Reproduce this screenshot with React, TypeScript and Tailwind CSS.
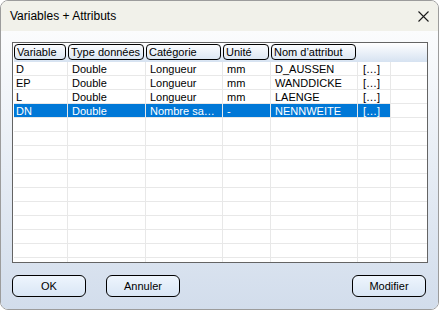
import React from "react";

const widths = [54, 78, 77, 48, 87, 33];
const headers = ["Variable", "Type données", "Catégorie", "Unité", "Nom d’attribut"];
const rows: string[][] = [
  ["D", "Double", "Longueur", "mm", "D_AUSSEN", "[…]"],
  ["EP", "Double", "Longueur", "mm", "WANDDICKE", "[…]"],
  ["L", "Double", "Longueur", "mm", "LAENGE", "[…]"],
  ["DN", "Double", "Nombre sa…", "-", "NENNWEITE", "[…]"],
];

function Row({ cells, selected }: { cells: string[]; selected?: boolean }) {
  return (
    <div className="flex h-[14px] shrink-0 border-b border-[#e8e8e8]">
      {widths.map((w, i) => (
        <div
          key={i}
          style={{ width: w }}
          className={`h-[13px] shrink-0 border-r border-[#e8e8e8] whitespace-nowrap overflow-hidden text-[11px] leading-[14px] ${
            i === 0 ? "pl-[2px]" : i === 5 ? "pl-[5px]" : "pl-[4px]"
          } ${selected ? "bg-[#0078d7] text-white" : "text-black"}`}
        >
          {cells[i] ?? ""}
        </div>
      ))}
      <div className="flex-1" />
    </div>
  );
}

function Btn({ label }: { label: string }) {
  return (
    <div className="w-[74px] h-[22px] rounded-[6px] border border-black bg-gradient-to-b from-[#eef5fd] to-[#d9e6f5] flex items-center justify-center text-[11px] text-black">
      {label}
    </div>
  );
}

export default function App() {
  const empty = Array.from({ length: 11 }, () => [] as string[]);
  return (
    <div
      className="w-[439px] h-[310px] border border-[#9c9c9c] rounded-[8px] overflow-hidden flex flex-col"
      style={{ fontFamily: '"Liberation Sans", Arial, sans-serif' }}
    >
      <div className="h-[30px] shrink-0 bg-[#f1f1ea] flex items-center justify-between pl-[9px] pr-[9px]">
        <span className="text-[12px] text-black">Variables + Attributs</span>
        <svg width="11" height="11" viewBox="0 0 11 11">
          <path d="M0.5 0.5 L10.5 10.5 M10.5 0.5 L0.5 10.5" stroke="#1a1a1a" strokeWidth="1.1" />
        </svg>
      </div>
      <div className="flex-1 bg-gradient-to-b from-[#fbfcfd] to-[#d2ddec] pt-[11px] pl-[11px] flex flex-col">
        <div className="w-[416px] h-[221px] border border-[#646464] bg-white overflow-hidden flex flex-col pl-[1px]">
          <div className="h-[19px] shrink-0 flex bg-gradient-to-b from-white to-[#d6e2f1] pt-[1px]">
            {headers.map((h, i) => (
              <div key={i} style={{ width: widths[i] }} className="shrink-0 h-[16px] pr-[2px]">
                <div className="h-[16px] border border-black rounded-[4px] pl-[2px] text-[11px] leading-[14px] text-black whitespace-nowrap overflow-hidden">
                  {h}
                </div>
              </div>
            ))}
          </div>
          {rows.map((r, i) => (
            <Row key={i} cells={r} selected={i === 3} />
          ))}
          {empty.map((r, i) => (
            <Row key={`e${i}`} cells={r} />
          ))}
        </div>
        <div className="flex mt-[12px] w-[414px]">
          <Btn label="OK" />
          <div className="w-[20px]" />
          <Btn label="Annuler" />
          <div className="flex-1" />
          <Btn label="Modifier" />
        </div>
      </div>
    </div>
  );
}
